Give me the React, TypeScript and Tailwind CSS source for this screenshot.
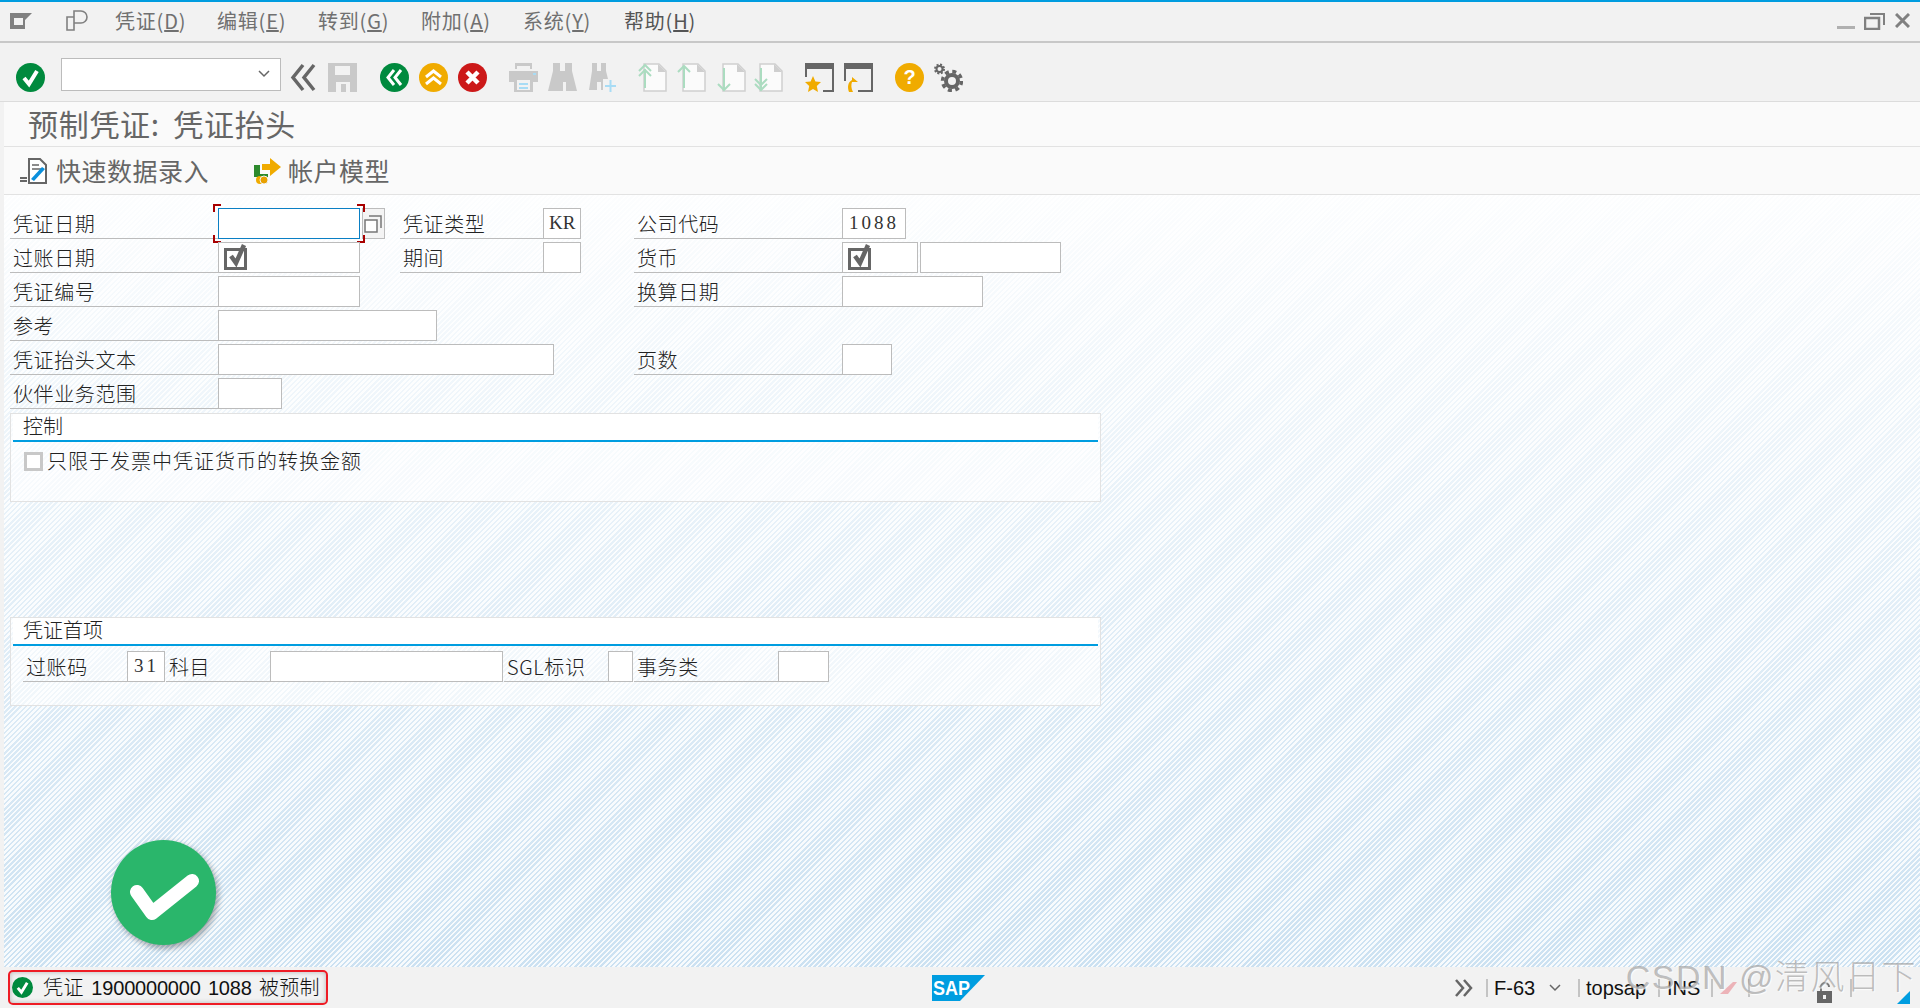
import type { ReactNode } from "react";

const cjk = "font-['Noto_Sans_CJK_SC','Liberation_Sans',sans-serif]";

function Label({ className, children }: { className: string; children: ReactNode }) {
  return (
    <div className={`h-[34px] shrink-0 border-b border-[#bcbcbc] pl-[3px] pt-[4px] text-[20px] leading-[30px] tracking-[0.6px] text-[#222] whitespace-nowrap font-light ${className}`}>
      {children}
    </div>
  );
}

function Field({ className, focus, children }: { className: string; focus?: boolean; children?: ReactNode }) {
  return (
    <div className={`relative mt-[3px] h-[31px] shrink-0 border bg-white font-['Liberation_Serif',serif] text-[19px] leading-[27px] text-[#333] ${focus ? "border-[#0a7fc4]" : "border-[#bcbcbc]"} ${className}`}>
      {children}
    </div>
  );
}

function Required() {
  return (
    <svg className="absolute left-[5px] top-[0px] h-[27px] w-[25px]" viewBox="0 0 25 27" aria-hidden>
      <path d="M1.5 6.5h20v19h-20z" fill="#fff" stroke="#666" strokeWidth="3" />
      <path d="M7 13l5 7 8-18" fill="none" stroke="#666" strokeWidth="4.5" />
    </svg>
  );
}

function Circle({ fill, children }: { fill: string; children: ReactNode }) {
  return (
    <svg className="h-[29px] w-[29px]" viewBox="0 0 29 29" aria-hidden>
      <circle cx="14.5" cy="14.5" r="14.5" fill={fill} />
      {children}
    </svg>
  );
}

function CheckCircle() {
  return (
    <Circle fill="#008a3e">
      <path d="M8 15l5 6 8-13" fill="none" stroke="#fff" strokeWidth="4" />
    </Circle>
  );
}

function Page({ children }: { children?: ReactNode }) {
  return (
    <svg className="h-[29px] w-[29px]" viewBox="0 0 29 29" aria-hidden>
      <path d="M6 1h15l7 7v20H6z" fill="#fbfbfb" stroke="#d0d0d0" strokeWidth="1.5" />
      <path d="M20 1l8 8h-8z" fill="#cfcfcf" />
      {children}
    </svg>
  );
}

function Menu({ text, hot }: { text: string; hot: string }) {
  return (
    <span className="whitespace-nowrap tracking-[0.8px]">
      {text}(<u>{hot}</u>)
    </span>
  );
}

function Sep() {
  return <div className="h-[18px] w-[2px] shrink-0 bg-[#c4c4c4]" />;
}

function Corner({ className }: { className: string }) {
  return <div className={`absolute h-[8px] w-[8px] border-[#a80000] ${className}`} />;
}

export default function App() {
  return (
    <div className={`relative flex h-[1008px] w-full flex-col overflow-hidden bg-[#f2f2f2] ${cjk}`}>
      <div className="h-[2px] shrink-0 bg-[#009de0]" />

      {/* menu bar */}
      <div className="flex h-[41px] shrink-0 items-center border-b-2 border-[#c8c8c8] bg-[#f2f2f2] pb-[2px] text-[20px] text-[#707070] shadow-[0_1px_2px_rgba(0,0,0,0.08)]">
        <svg className="ml-[10px] h-[16px] w-[22px]" viewBox="0 0 22 16" aria-hidden>
          <path d="M0 0h22l-7 7v9H0z" fill="#808080" />
          <path d="M4 5h9v7H4z" fill="#f2f2f2" />
        </svg>
        <svg className="ml-[34px] h-[21px] w-[22px]" viewBox="0 0 22 21" aria-hidden>
          <path d="M1 7h7v13H1zM8 1h7a6 6 0 0 1 0 12H8zM8 1v19" fill="none" stroke="#808080" strokeWidth="1.6" />
        </svg>
        <div className="ml-[27px] w-[102px]"><Menu text="凭证" hot="D" /></div>
        <div className="w-[101px]"><Menu text="编辑" hot="E" /></div>
        <div className="w-[103px]"><Menu text="转到" hot="G" /></div>
        <div className="w-[102px]"><Menu text="附加" hot="A" /></div>
        <div className="w-[101px]"><Menu text="系统" hot="Y" /></div>
        <div className="text-[#555]"><Menu text="帮助" hot="H" /></div>
        <div className="ml-auto flex items-center pr-[10px]">
          <div className="mt-[14px] h-[3px] w-[18px] bg-[#b0b0b0]" />
          <svg className="ml-[9px] h-[18px] w-[21px]" viewBox="0 0 21 18" aria-hidden>
            <path d="M1 6h14v11H1z" fill="none" stroke="#808080" strokeWidth="2.5" />
            <path d="M6 2h14v11" fill="none" stroke="#808080" strokeWidth="2" />
          </svg>
          <svg className="ml-[10px] h-[15px] w-[15px]" viewBox="0 0 15 15" aria-hidden>
            <path d="M1 1l13 13M14 1L1 14" stroke="#808080" strokeWidth="3" />
          </svg>
        </div>
      </div>

      {/* system toolbar */}
      <div className="flex h-[59px] shrink-0 items-center border-b border-[#dcdcdc] bg-[#f2f2f2] pl-[16px] pt-[10px]">
        <CheckCircle />
        <div className="-mt-[6px] ml-[16px] flex h-[33px] w-[220px] items-center justify-end border border-[#bcbcbc] bg-white pr-[10px]">
          <svg className="h-[8px] w-[12px]" viewBox="0 0 12 8" aria-hidden>
            <path d="M1 1l5 5 5-5" fill="none" stroke="#666" strokeWidth="1.5" />
          </svg>
        </div>
        <svg className="ml-[9px] h-[29px] w-[26px]" viewBox="0 0 26 29" aria-hidden>
          <path d="M13 2L3 14.5 13 27M24 2L14 14.5 24 27" fill="none" stroke="#666" strokeWidth="3.5" />
        </svg>
        <svg className="ml-[12px] h-[29px] w-[29px]" viewBox="0 0 29 29" aria-hidden>
          <path d="M0 0h29v29H0z" fill="#c9c9c9" />
          <path d="M7 3h15v9H7zM8 19h14v10H8z" fill="#f2f2f2" />
          <path d="M13 21h5v8h-5z" fill="#c9c9c9" />
        </svg>
        <div className="ml-[23px]">
          <Circle fill="#008a3e">
            <path d="M14 7l-6 7.5 6 7.5M21 7l-6 7.5 6 7.5" fill="none" stroke="#fff" strokeWidth="3" />
          </Circle>
        </div>
        <div className="ml-[10px]">
          <Circle fill="#f0ab00">
            <path d="M7 14l7.5-6 7.5 6M7 21l7.5-6 7.5 6" fill="none" stroke="#fff" strokeWidth="3" />
          </Circle>
        </div>
        <div className="ml-[10px]">
          <Circle fill="#cc1919">
            <path d="M9 9l11 11M20 9L9 20" fill="none" stroke="#fff" strokeWidth="4.5" />
          </Circle>
        </div>
        <svg className="ml-[22px] h-[29px] w-[29px]" viewBox="0 0 29 29" aria-hidden>
          <path d="M6 0h17v6H6zM0 8h29v11H0zM5 17h19v12H5z" fill="#c9c9c9" />
          <path d="M8 3h13v3H8zM8 17h13v10H8z" fill="#f2f2f2" />
          <path d="M10 20h9v2h-9zM10 24h9v2h-9z" fill="#a8dcf5" />
          <path d="M24 10h3v2h-3z" fill="#a8dcf5" />
        </svg>
        <svg className="ml-[10px] h-[29px] w-[29px]" viewBox="0 0 29 29" aria-hidden>
          <path d="M5 0h7v8h5V0h7v8l5 20h-11v-9h-3v9H0L5 8z" fill="#c9c9c9" />
        </svg>
        <svg className="ml-[12px] h-[29px] w-[27px]" viewBox="0 0 27 29" aria-hidden>
          <path d="M3 0h5v8h4V0h5v8l2 8h-5v11h-2v-8h-4v8H0L3 8z" fill="#c9c9c9" />
          <path d="M16 23h11M21.5 17v12" stroke="#a8dcf5" strokeWidth="2" />
        </svg>
        <div className="ml-[22px]">
          <Page>
            <path d="M7 25V6M1 8l6-6 6 6M1 13l6-6 6 6" fill="none" stroke="#abdcc0" strokeWidth="2" />
          </Page>
        </div>
        <div className="ml-[10px]">
          <Page>
            <path d="M7 25V3M1 9l6-6 6 6" fill="none" stroke="#abdcc0" strokeWidth="2" />
          </Page>
        </div>
        <div className="ml-[11px]">
          <Page>
            <path d="M7 5v22M1 21l6 6 6-6" fill="none" stroke="#abdcc0" strokeWidth="2" />
          </Page>
        </div>
        <div className="ml-[8px]">
          <Page>
            <path d="M7 5v22M1 21l6 6 6-6M1 16l6 6 6-6" fill="none" stroke="#abdcc0" strokeWidth="2" />
          </Page>
        </div>
        <svg className="ml-[22px] h-[29px] w-[29px]" viewBox="0 0 29 29" aria-hidden>
          <path d="M0 0h29v6H0zM27 6h2v23H18v-2h9zM0 6h2v8H0z" fill="#666" />
          <path d="M8 13l2.4 5.5 5.6.5-4.2 4 1.2 6L8 26l-5 3 1.2-6L0 19l5.6-.5z" fill="#f0ab00" />
        </svg>
        <svg className="ml-[10px] h-[29px] w-[29px]" viewBox="0 0 29 29" aria-hidden>
          <path d="M0 0h29v6H0zM27 6h2v23H14v-2h13zM0 6h2v12H0z" fill="#666" />
          <path d="M5 29c-2-5-1-10 3-12v-3l6 5h-6c-1 3-1 6 1 10z" fill="#f0ab00" />
        </svg>
        <div className="ml-[22px]">
          <Circle fill="#f0ab00">
            <text x="14.5" y="21" textAnchor="middle" fontSize="20" fontWeight="700" fill="#fff" fontFamily="Liberation Sans">?</text>
          </Circle>
        </div>
        <svg className="ml-[10px] h-[29px] w-[29px]" viewBox="0 0 29 29" aria-hidden>
          <circle cx="18" cy="18" r="6" fill="none" stroke="#666" strokeWidth="4" />
          <circle cx="18" cy="18" r="9.5" fill="none" stroke="#666" strokeWidth="3.5" strokeDasharray="4 3.46" />
          <circle cx="5.5" cy="6" r="3" fill="none" stroke="#666" strokeWidth="2" />
          <circle cx="5.5" cy="6" r="4.5" fill="none" stroke="#666" strokeWidth="2" strokeDasharray="2 1.53" />
        </svg>
      </div>

      {/* content with the left gutter */}
      <div className="ml-[4px] flex min-h-0 flex-1 flex-col">
        <div className="flex h-[45px] shrink-0 items-center whitespace-nowrap border-b border-[#e2e2e2] bg-[#fafafa] pb-[2px] pl-[24px] text-[30px] tracking-[0.7px] text-[#666] [word-spacing:6px]">
          预制凭证: 凭证抬头
        </div>
        <div className="flex h-[48px] shrink-0 items-center border-b border-[#e2e2e2] bg-[#fafafa] pl-[16px] text-[25px] tracking-[0.5px] text-[#666]">
          <svg className="h-[26px] w-[28px]" viewBox="0 0 28 26" aria-hidden>
            <path d="M9 1h11l6 6v18H9z" fill="#fff" stroke="#666" strokeWidth="2" />
            <path d="M12 7h7M12 11h10" stroke="#666" strokeWidth="1.5" />
            <path d="M0 20h7M0 23h7" stroke="#666" strokeWidth="2" />
            <path d="M11 21l3 2 11-12-3-2z" fill="#0a8fdc" />
          </svg>
          <span className="ml-[8px] whitespace-nowrap">快速数据录入</span>
          <svg className="ml-[44px] h-[26px] w-[28px]" viewBox="0 0 28 26" aria-hidden>
            <path d="M1 7h6v9h8v3H1z" fill="#2d8a2d" />
            <path d="M9 6h8V0l11 9-11 9v-6H9z" fill="#f0ab00" />
            <circle cx="7" cy="22" r="4" fill="#f0ab00" />
            <circle cx="11" cy="22" r="4" fill="#e8a000" stroke="#f2f2f2" strokeWidth="1" />
          </svg>
          <span className="ml-[7px] whitespace-nowrap">帐户模型</span>
        </div>

        <div className="relative flex min-h-0 flex-1 flex-col bg-[linear-gradient(to_bottom,rgba(255,255,255,0.95)_0%,rgba(255,255,255,0.1)_100%),repeating-linear-gradient(135deg,#f6fafd_0,#f6fafd_1.8px,#c6def0_1.8px,#c6def0_3.6px)] pl-[6px] pt-[10px]">
          <div className="flex">
            <Label className="w-[208px]">凭证日期</Label>
            <Field className="w-[142px]" focus>
              <Corner className="-left-[6px] -top-[5px] border-l-2 border-t-2" />
              <Corner className="-right-[6px] -top-[5px] border-r-2 border-t-2" />
              <Corner className="-left-[6px] -bottom-[5px] border-l-2 border-b-2" />
              <Corner className="-right-[6px] -bottom-[5px] border-r-2 border-b-2" />
            </Field>
            <div className="ml-[2px] mt-[3px] flex h-[31px] w-[23px] items-center justify-center border border-[#bcbcbc] bg-[#f4f4f4]">
              <svg className="h-[20px] w-[19px]" viewBox="0 0 19 20" aria-hidden>
                <path d="M1 6h12v12H1z" fill="#fff" stroke="#777" strokeWidth="1.5" />
                <path d="M5 2h12v12" fill="none" stroke="#777" strokeWidth="1.5" />
              </svg>
            </div>
            <Label className="ml-[15px] w-[143px]">凭证类型</Label>
            <Field className="w-[38px] pl-[5px]">KR</Field>
            <Label className="ml-[53px] w-[208px]">公司代码</Label>
            <Field className="w-[64px] pl-[6px] tracking-[3px]">1088</Field>
          </div>
          <div className="flex">
            <Label className="w-[208px]">过账日期</Label>
            <Field className="w-[142px]"><Required /></Field>
            <Label className="ml-[40px] w-[143px]">期间</Label>
            <Field className="w-[38px]" />
            <Label className="ml-[53px] w-[208px]">货币</Label>
            <Field className="w-[76px]"><Required /></Field>
            <Field className="ml-[2px] w-[141px]" />
          </div>
          <div className="flex">
            <Label className="w-[208px]">凭证编号</Label>
            <Field className="w-[142px]" />
            <Label className="ml-[274px] w-[208px]">换算日期</Label>
            <Field className="w-[141px]" />
          </div>
          <div className="flex">
            <Label className="w-[208px]">参考</Label>
            <Field className="w-[219px]" />
          </div>
          <div className="flex">
            <Label className="w-[208px]">凭证抬头文本</Label>
            <Field className="w-[336px]" />
            <Label className="ml-[80px] w-[208px]">页数</Label>
            <Field className="w-[50px]" />
          </div>
          <div className="flex">
            <Label className="w-[208px]">伙伴业务范围</Label>
            <Field className="w-[64px]" />
          </div>

          <section className="mt-[4px] h-[89px] w-[1091px] shrink-0 border border-[#e2e2e2] bg-white/60">
            <div className="ml-[2px] mr-[2px] h-[28px] border-b-2 border-[#009de0] bg-white pl-[10px] text-[20px] font-light leading-[23px] text-[#222]">
              控制
            </div>
            <div className="flex items-center pl-[13px] pt-[7px]">
              <div className="h-[19px] w-[19px] border-[3px] border-[#c8c8c8] bg-white" />
              <span className="ml-[4px] text-[20px] font-light leading-[24px] tracking-[1px] text-[#222]">只限于发票中凭证货币的转换金额</span>
            </div>
          </section>

          <section className="mt-[115px] h-[89px] w-[1091px] shrink-0 border border-[#e2e2e2] bg-white/60">
            <div className="ml-[2px] mr-[2px] h-[28px] border-b-2 border-[#009de0] bg-white pl-[10px] text-[20px] font-light leading-[24px] text-[#222]">
              凭证首项
            </div>
            <div className="mt-[2px] flex pl-[12px]">
              <Label className="w-[104px]">过账码</Label>
              <Field className="w-[38px] pl-[6px] tracking-[3px]">31</Field>
              <Label className="ml-[1px] w-[104px]">科目</Label>
              <Field className="w-[233px]" />
              <Label className="ml-[1px] w-[104px] pl-[2px]">SGL标识</Label>
              <Field className="w-[25px]" />
              <Label className="ml-[1px] w-[144px]">事务类</Label>
              <Field className="w-[51px]" />
            </div>
          </section>

          {/* success overlay */}
          <div className="absolute bottom-[22px] left-[107px] flex h-[105px] w-[105px] items-center justify-center rounded-full bg-[#2ab66b] shadow-[2px_3px_6px_rgba(0,0,0,0.35)]">
            <svg className="h-[60px] w-[72px]" viewBox="0 0 72 60" aria-hidden>
              <path d="M9 29l15 21 40-32" fill="none" stroke="#fff" strokeWidth="14" strokeLinecap="round" strokeLinejoin="round" />
            </svg>
          </div>
        </div>
      </div>

      {/* status bar */}
      <div className="relative flex h-[41px] shrink-0 items-center bg-[#f2f2f2] text-[20px] text-[#111]">
        <div className="ml-[8px] flex h-[35px] w-[320px] shrink-0 items-center rounded-[5px] border-2 border-[#ee1c25] pl-[2px] shadow-[inset_0_0_5px_rgba(0,0,0,0.25)]">
          <div className="h-[21px] w-[21px] shrink-0 [&>svg]:h-[21px] [&>svg]:w-[21px]"><CheckCircle /></div>
          <span className="ml-[10px] whitespace-nowrap font-['Liberation_Sans','Noto_Sans_CJK_SC',sans-serif] font-normal tracking-[-0.2px] [word-spacing:2px]">
            <span className={`font-light tracking-[0.5px] ${cjk}`}>凭证</span> 1900000000 1088 <span className={`font-light tracking-[0.2px] ${cjk}`}>被预制</span>
          </span>
        </div>
        <svg className="ml-[604px] h-[26px] w-[53px] shrink-0" viewBox="0 0 53 26" aria-hidden>
          <path d="M0 0h53L28 26H0z" fill="#009de0" />
          <text x="1" y="20" fontSize="21" fontWeight="700" fill="#fff" fontFamily="Liberation Sans" textLength="37" lengthAdjust="spacingAndGlyphs">SAP</text>
        </svg>
        <svg className="ml-[469px] h-[18px] w-[19px] shrink-0" viewBox="0 0 19 18" aria-hidden>
          <path d="M2 1l7 8-7 8M10 1l7 8-7 8" fill="none" stroke="#666" strokeWidth="2.5" />
        </svg>
        <div className="ml-[13px]"><Sep /></div>
        <span className="ml-[6px] w-[55px] shrink-0 font-['Liberation_Sans',sans-serif]">F-63</span>
        <svg className="h-[8px] w-[12px] shrink-0" viewBox="0 0 12 8" aria-hidden>
          <path d="M1 1l5 5 5-5" fill="none" stroke="#666" strokeWidth="1.5" />
        </svg>
        <div className="ml-[17px]"><Sep /></div>
        <span className="ml-[6px] w-[63px] shrink-0 font-['Liberation_Sans',sans-serif]">topsap</span>
        <div className="ml-[9px]"><Sep /></div>
        <span className="ml-[7px] w-[33px] shrink-0 font-['Liberation_Sans',sans-serif]">INS</span>
        <div className="ml-[11px]"><Sep /></div>
        <svg className="ml-[7px] h-[12px] w-[17px] shrink-0" viewBox="0 0 17 12" aria-hidden>
          <path d="M0 12L13 0h4L8 12z" fill="#ecb3b8" />
        </svg>
        <div className="ml-[11px]"><Sep /></div>
        <svg className="ml-[67px] mt-[8px] h-[22px] w-[15px] shrink-0" viewBox="0 0 15 22" aria-hidden>
          <path d="M4 10V6a4 4 0 0 1 8 0" fill="none" stroke="#777" strokeWidth="2" />
          <path d="M0 10h15v12H0z" fill="#666" />
          <path d="M6 14h3v4H6z" fill="#f2f2f2" />
        </svg>
        <div className="ml-[18px]"><Sep /></div>
        <svg className="absolute bottom-[4px] right-[10px] h-[13px] w-[13px]" viewBox="0 0 13 13" aria-hidden>
          <path d="M13 0v13H0z" fill="#009de0" />
        </svg>
      </div>

      {/* watermark */}
      <div className="pointer-events-none absolute bottom-[13px] right-[3px] whitespace-nowrap font-['Liberation_Sans','Noto_Sans_CJK_SC',sans-serif] text-[34px] font-light leading-[36px] tracking-[1.5px] text-[#8a8a8a]/55 [text-shadow:1px_1px_1px_rgba(255,255,255,0.8)]">
        CSDN @清风日下
      </div>
    </div>
  );
}
